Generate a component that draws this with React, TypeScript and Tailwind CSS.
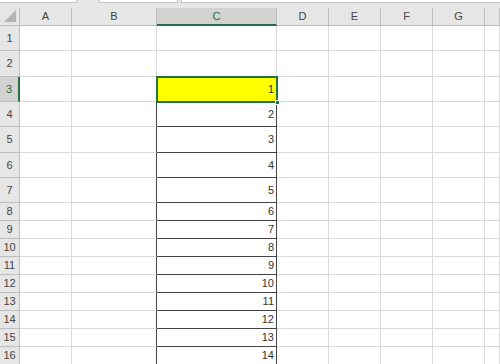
const COLS = ['A', 'B', 'C', 'D', 'E', 'F', 'G', '']
const ROW_HEIGHTS = [25, 26, 25, 25, 26, 25, 25, 18, 18, 18, 18, 18, 18, 18, 18, 18]

const font = { fontFamily: '"Liberation Sans", Arial, sans-serif' }

export default function App() {
  return (
    <div className="w-[500px] h-[364px] overflow-hidden bg-white select-none" style={font}>
      {/* formula bar edge */}
      <div className="h-[8px] bg-[#e6e6e6] flex items-start">
        <div className="w-[77px] h-[3px] bg-white border-b border-r border-[#c6c6c6]" />
        <div className="ml-[22px] w-[79px] h-[3px] bg-white border-b border-l border-r border-[#c6c6c6]" />
        <div className="ml-[3px] flex-1 h-[3px] bg-white border-b border-l border-[#c6c6c6]" />
      </div>

      <div className="relative">
        <div
          className="grid"
          style={{
            gridTemplateColumns: '20px 52px 85px 120px 52px 52px 52px 52px 1fr',
            gridTemplateRows: `18px ${ROW_HEIGHTS.map(h => h + 'px').join(' ')}`,
          }}
        >
          {/* header row */}
          <div className="relative bg-[#e6e6e6] border-r border-b border-[#bdbdbd]">
            <div className="absolute right-[3px] bottom-[3px] w-0 h-0 border-l-[12px] border-l-transparent border-b-[12px] border-b-[#b4b4b4]" />
          </div>
          {COLS.map((c, i) =>
            c === 'C' ? (
              <div
                key={i}
                className="bg-[#d2d2d2] border-r border-[#bdbdbd] border-b-2 border-b-[#217346] text-[11px] text-[#217346] flex items-center justify-center"
              >
                {c}
              </div>
            ) : (
              <div
                key={i}
                className="bg-[#e6e6e6] border-r border-b border-[#bdbdbd] text-[11px] text-[#444] flex items-center justify-center"
              >
                {c}
              </div>
            )
          )}

          {ROW_HEIGHTS.map((_, i) => {
            const r = i + 1
            const selected = r === 3
            const boxed = r >= 3
            return [
              <div
                key={`h${r}`}
                className={
                  selected
                    ? 'bg-[#d2d2d2] border-b border-[#bdbdbd] border-r-2 border-r-[#217346] text-[11px] text-[#217346] flex items-center justify-center'
                    : 'bg-[#e6e6e6] border-r border-b border-[#bdbdbd] text-[11px] text-[#444] flex items-center justify-center'
                }
              >
                {r}
              </div>,
              <div key={`a${r}`} className="border-r border-b border-[#dadada]" />,
              <div
                key={`b${r}`}
                className={`border-b border-[#dadada] border-r ${r >= 4 ? 'border-r-[#444]' : ''}`}
              />,
              <div
                key={`c${r}`}
                className={`text-[11px] text-[#333] flex items-center justify-end pr-[2px] ${
                  boxed ? 'border-r border-b border-[#444]' : 'border-r border-b border-[#dadada]'
                } ${selected ? 'bg-[#ffff00]' : ''}`}
              >
                {boxed ? r - 2 : ''}
              </div>,
              ...['d', 'e', 'f', 'g', 'h'].map(k => (
                <div key={`${k}${r}`} className="border-r border-b border-[#dadada]" />
              )),
            ]
          })}
        </div>

        {/* selection box on C3 */}
        <div className="absolute left-[156px] top-[68px] w-[122px] h-[27px] border-2 border-[#217346] pointer-events-none" />
        <div className="absolute left-[275px] top-[92px] w-[5px] h-[5px] bg-[#217346] border border-white" />
      </div>
    </div>
  )
}
